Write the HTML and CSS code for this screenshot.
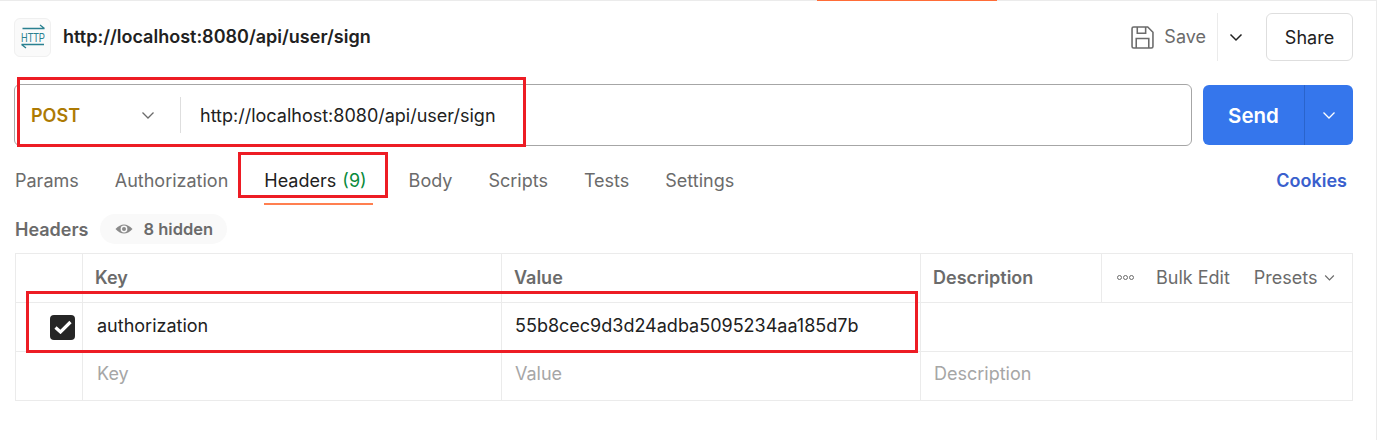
FILE: index.html
```html
<!DOCTYPE html>
<html lang="en">
<head>
    <meta charset="UTF-8">
    <title>http://localhost:8080/api/user/sign</title>
    <link rel="stylesheet" href="styles.css">
</head>
<body>
    <div class="tab-marker"></div>
    <div class="request-pane">
        <div class="title-row">
            <div class="http-icon">
                <svg width="32" height="30" viewBox="0 0 32 30" fill="none" stroke="#2a8090" stroke-width="1.300">
                    <path d="M5.500 6.500H27.500M23 3L27.500 6.500"/>
                    <path d="M4.500 22.500H27M4.500 22.500L9 26"/>
                    <text x="4" y="19.800" textLength="24" lengthAdjust="spacingAndGlyphs" class="http-text">HTTP</text>
                </svg>
            </div>
            <span class="request-name">http://localhost:8080/api/user/sign</span>
            <div class="title-actions">
                <svg class="save-icon" width="23" height="23" viewBox="1 1 22 22" fill="none" stroke="#6b6b6b" stroke-width="1.500">
                    <path d="M2 3.500Q2 2 3.500 2H17L22 7V20.500Q22 22 20.500 22H3.500Q2 22 2 20.500Z"/>
                    <path d="M7 2V8H15V2"/>
                    <path d="M6 22V13H18V22"/>
                </svg>
                <span class="save-label">Save</span>
                <div class="save-more">
                    <svg width="14" height="14" viewBox="0 0 14 14" fill="none" stroke="#212121" stroke-width="1.500"><path d="M1.500 4.500L7 10L12.500 4.500"/></svg>
                </div>
                <button class="share-button">Share</button>
            </div>
        </div>

        <div class="url-row">
            <div class="url-box">
                <div class="method">
                    <span>POST</span>
                    <svg width="14" height="14" viewBox="0 0 14 14" fill="none" stroke="#6b6b6b" stroke-width="1.300"><path d="M1.500 4.500L7 10L12.500 4.500"/></svg>
                </div>
                <div class="url-text">http://localhost:8080/api/user/sign</div>
            </div>
            <div class="send-button">
                <span class="send-label">Send</span>
                <span class="send-more">
                    <svg width="14" height="14" viewBox="0 0 14 14" fill="none" stroke="#fff" stroke-width="1.300"><path d="M1.500 4.500L7 10L12.500 4.500"/></svg>
                </span>
            </div>
        </div>

        <div class="tabs">
            <span class="tab">Params</span>
            <span class="tab">Authorization</span>
            <span class="tab active">Headers <em>(9)</em></span>
            <span class="tab">Body</span>
            <span class="tab">Scripts</span>
            <span class="tab">Tests</span>
            <span class="tab">Settings</span>
            <span class="cookies">Cookies</span>
        </div>

        <div class="headers-bar">
            <strong>Headers</strong>
            <div class="hidden-pill">
                <svg width="18" height="12" viewBox="0 0 18 12"><path d="M0.500 6Q9 -3 17.500 6Q9 15 0.500 6Z" fill="#8a8a8a"/><circle cx="9" cy="6" r="3.400" fill="#f9f9f9"/><circle cx="9" cy="6" r="2" fill="#8a8a8a"/></svg>
                <span>8 hidden</span>
            </div>
        </div>

        <div class="params-table">
            <div class="row head">
                <div class="cell check"></div>
                <div class="cell">Key</div>
                <div class="cell">Value</div>
                <div class="cell desc">Description</div>
                <div class="cell tools">
                    <span class="dots"><i></i><i></i><i></i></span>
                    <span>Bulk Edit</span>
                    <span class="presets">Presets
                        <svg width="11" height="11" viewBox="0 0 14 14" fill="none" stroke="#6b6b6b" stroke-width="1.500"><path d="M1.500 4.500L7 10L12.500 4.500"/></svg>
                    </span>
                </div>
            </div>
            <div class="row filled">
                <div class="cell check">
                    <span class="checkbox">
                        <svg width="18" height="14" viewBox="0 0 18 14" fill="none" stroke="#fff" stroke-width="3.200"><path d="M1.500 7.500L6.500 12L16.500 2"/></svg>
                    </span>
                </div>
                <div class="cell">authorization</div>
                <div class="cell value">55b8cec9d3d24adba5095234aa185d7b</div>
                <div class="cell wide"></div>
            </div>
            <div class="row empty">
                <div class="cell check"></div>
                <div class="cell">Key</div>
                <div class="cell value">Value</div>
                <div class="cell value wide">Description</div>
            </div>
        </div>
    </div>

    <!-- red boxes drawn on top of the screenshot -->
    <div class="mark mark-url"></div>
    <div class="mark mark-tab"></div>
    <div class="mark mark-row"></div>
</body>
</html>
```

FILE: styles.css
```css
/* General styling */
body {
    margin: 0;
    width: 1398px;
    height: 440px;
    overflow: hidden;
    background-color: #fff;
    color: #212121;
    font-family: Inter, "Liberation Sans", sans-serif;
    font-size: 18px;
}

.tab-marker {
    position: absolute;
    top: 0;
    left: 817px;
    width: 180px;
    height: 1px;
    background-color: #ff6c37;
}

.request-pane {
    box-sizing: border-box;
    width: 1377px;
    height: 440px;
    padding: 12px 23px 0 14px;
    border-top: 1px solid #ebebeb;
    border-right: 1px solid #ebebeb;
}

/* Title row */
.title-row {
    display: flex;
    align-items: center;
    height: 48px;
}

.http-icon {
    box-sizing: border-box;
    display: flex;
    align-items: center;
    justify-content: center;
    width: 37px;
    height: 39px;
    margin-right: 12px;
    border: 1px solid #f0f0f0;
    border-radius: 6px;
    background-color: #fafafa;
}

.http-icon svg {
    overflow: visible;
}

.http-text {
    font-family: "Liberation Sans", sans-serif;
    font-size: 12px;
    fill: #2a8090;
    stroke: none;
}

.request-name {
    padding-bottom: 2px;
    font-weight: 600;
}

.title-actions {
    display: flex;
    align-items: center;
    margin-left: auto;
}

.save-label {
    margin-left: 10px;
    padding-bottom: 1px;
    color: #6b6b6b;
}

.save-more {
    display: flex;
    align-items: center;
    height: 48px;
    margin-left: 11px;
    padding: 0 23px 0 11px;
    border-left: 1px solid #ebebeb;
}

.share-button {
    width: 87px;
    height: 48px;
    padding: 0;
    font: inherit;
    color: #212121;
    background-color: #fff;
    border: 1px solid #dedede;
    border-radius: 6px;
}

/* URL row */
.url-row {
    display: flex;
    gap: 11px;
    height: 62px;
    margin-top: 23px;
}

.url-box {
    box-sizing: border-box;
    flex: 1;
    display: flex;
    align-items: center;
    border: 1px solid #a6a6a6;
    border-radius: 6px;
}

.method {
    box-sizing: border-box;
    display: flex;
    align-items: center;
    justify-content: space-between;
    width: 166px;
    height: 36px;
    padding: 0 25px 0 16px;
    border-right: 1px solid #dedede;
    color: #ad7a03;
    font-weight: 600;
}

.url-text {
    padding-left: 19px;
}

.send-button {
    display: flex;
    width: 150px;
    height: 60px;
    margin-top: 1px;
    color: #fff;
    background-color: #3576ec;
    border-radius: 6px;
}

.send-label {
    display: flex;
    align-items: center;
    justify-content: center;
    width: 101px;
    font-size: 20.500px;
    font-weight: 600;
    border-right: 1px solid #2a64cc;
}

.send-more {
    flex: 1;
    display: flex;
    align-items: center;
    justify-content: center;
}

/* Tabs */
.tabs {
    display: flex;
    align-items: center;
    height: 68px;
    padding-left: 1px;
    color: #6b6b6b;
}

.tab {
    position: relative;
    margin-right: 36px;
}

.tab.active {
    padding-right: 6px;
    color: #212121;
}

.tab.active::after {
    content: "";
    position: absolute;
    left: 0;
    right: 0;
    bottom: -14px;
    height: 2px;
    background-color: #ff7f50;
}

.tab em {
    margin-left: 1px;
    font-style: normal;
    color: #0a8a3c;
}

.cookies {
    margin-left: auto;
    margin-right: 6px;
    color: #3a5fcd;
    font-weight: 600;
}

/* Headers bar */
.headers-bar {
    display: flex;
    align-items: center;
    gap: 11px;
    height: 30px;
    padding-left: 1px;
    color: #6b6b6b;
}

.headers-bar strong {
    font-weight: 600;
}

.hidden-pill {
    display: flex;
    align-items: center;
    gap: 11px;
    height: 30px;
    padding: 0 14px 0 15px;
    border-radius: 15px;
    background-color: #f9f9f9;
    font-size: 16.500px;
    font-weight: 600;
}

/* Table */
.params-table {
    margin-top: 9px;
    margin-left: 1px;
    width: 1338px;
    border: 1px solid #ebebeb;
    border-bottom: none;
    box-sizing: border-box;
}

.row {
    display: grid;
    grid-template-columns: 67px 419px 419px 181px 1fr;
    height: 49px;
    border-bottom: 1px solid #ebebeb;
    box-sizing: border-box;
}

.cell {
    box-sizing: border-box;
    display: flex;
    align-items: center;
    padding-left: 14px;
    border-right: 1px solid #ebebeb;
}

.cell.value {
    padding-left: 13px;
}

.cell:last-child {
    border-right: none;
}

.cell.wide {
    grid-column: span 2;
}

.row.head {
    color: #6b6b6b;
    font-weight: 600;
}

.row.head .cell {
    padding-left: 12px;
    padding-bottom: 2px;
}

.row.filled .cell {
    padding-bottom: 4px;
}

.row.empty .cell {
    padding-bottom: 6px;
    color: #a6a6a6;
}

.row .cell.check {
    justify-content: flex-end;
    padding: 0 7px 0 0;
}

.checkbox {
    display: flex;
    align-items: center;
    justify-content: center;
    width: 25px;
    height: 25px;
    border-radius: 4px;
    background-color: #262626;
}

.row.head .tools {
    gap: 20px;
    padding-left: 15px;
    font-weight: 400;
}

.dots {
    display: flex;
    gap: 1px;
    margin-right: 2px;
}

.dots i {
    box-sizing: border-box;
    width: 5px;
    height: 5px;
    border: 1px solid #6b6b6b;
    border-radius: 50%;
}

.presets {
    display: flex;
    align-items: center;
    gap: 6px;
    margin-left: 4px;
}

/* Red annotation boxes */
.mark {
    position: absolute;
    box-sizing: border-box;
    border: 3px solid #ed1c24;
}

.mark-url {
    left: 17px;
    top: 77px;
    width: 509px;
    height: 70px;
}

.mark-tab {
    left: 238px;
    top: 152px;
    width: 150px;
    height: 46px;
}

.mark-row {
    left: 26px;
    top: 291px;
    width: 892px;
    height: 62px;
}
```
